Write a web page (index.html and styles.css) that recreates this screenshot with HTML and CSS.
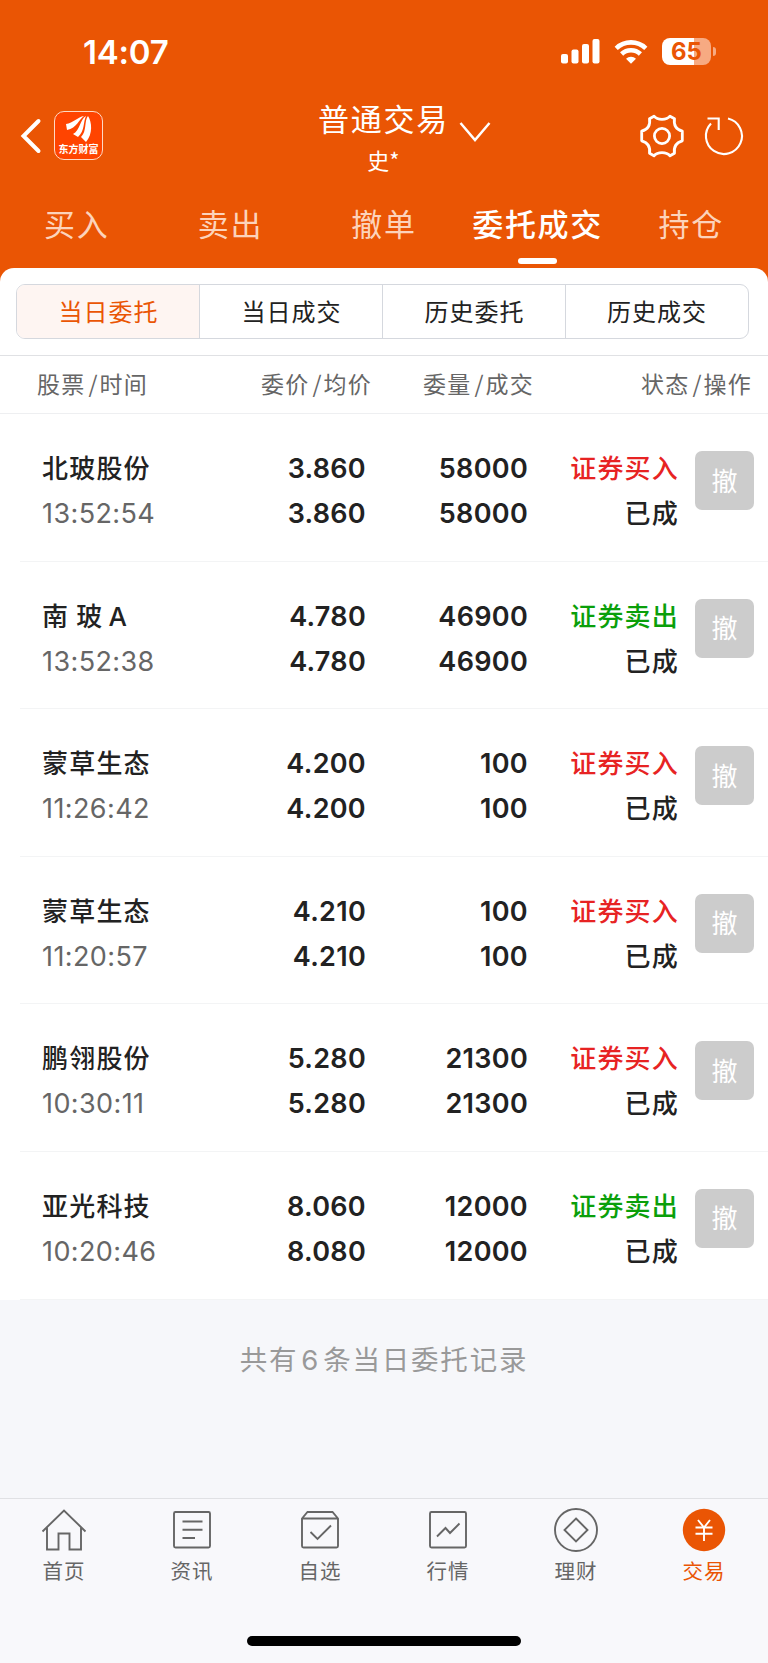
FILE: index.html
```html
<!DOCTYPE html>
<html lang="zh-CN">
<head>
<meta charset="UTF-8">
<meta name="viewport" content="width=device-width, initial-scale=1.0">
<title>普通交易</title>
<link rel="stylesheet" href="styles.css">
</head>
<body>
    <header>
        <div class="status-bar">
            <span class="clock">14:07</span>
            <div class="status-icons">
                <svg class="signal" width="39" height="25" viewBox="0 0 39 25" fill="#fff">
                    <rect x="0" y="15" width="7" height="9.5" rx="2"/>
                    <rect x="10.5" y="10.5" width="7" height="14" rx="2"/>
                    <rect x="21" y="5" width="7" height="19.5" rx="2"/>
                    <rect x="31.5" y="0" width="7" height="24.5" rx="2"/>
                </svg>
                <svg class="wifi" width="34" height="26" viewBox="0 0 34 26" fill="none" stroke="#fff" stroke-width="4.6">
                    <path d="M2.2 9.3a21.5 21.5 0 0 1 29.6 0"/>
                    <path d="M7.6 15a13.6 13.6 0 0 1 18.8 0"/>
                    <path d="M17 24.8l-5-5.1a7.2 7.2 0 0 1 10 0z" fill="#fff" stroke="none"/>
                </svg>
                <div class="battery"><span>65</span></div>
                <i class="battery-cap"></i>
            </div>
        </div>
        <div class="nav-bar">
            <div class="nav-left">
                <svg width="22" height="36" viewBox="0 0 22 36" fill="none" stroke="#fff" stroke-width="4" stroke-linecap="round" stroke-linejoin="miter">
                    <path d="M18.5 3L3.5 18 18.5 33"/>
                </svg>
                <div class="logo">
                    <svg width="28" height="28" viewBox="0 0 28 28" fill="#fff">
                        <path d="M1 9C8 8 13 2 19 1 14 4 12 13 2 15z"/>
                        <path d="M8 19C15 16 15 4 21 1 18 7 20 16 13 22z"/>
                        <path d="M16 22C22 16 19 6 23 1 27 7 28 19 21 27z"/>
                    </svg>
                    <span>东方财富</span>
                </div>
            </div>
            <div class="nav-title">
                <div class="title">普通交易</div>
                <div class="account">史*</div>
            </div>
            <svg class="arrow" width="32" height="22" viewBox="0 0 32 22" fill="none" stroke="#fff" stroke-width="2.5">
                <path d="M1.5 2L16 19 30.5 2"/>
            </svg>
            <div class="nav-right">
                <svg width="46" height="46" viewBox="-23 -23 46 46" fill="none" stroke="#fff" stroke-width="2.8" stroke-linejoin="round">
                    <circle r="7.6"/>
                    <path d="M-12.5 -17.3L-8 -19.8C-4.500 -15.600 4.500 -15.600 8 -19.800L12.500 -17.300C11.500 -11 14.500 -6.500 20.300 -4.800V4.800C14.500 6.500 11.500 11 12.500 17.300L8 19.800C4.500 15.600 -4.500 15.600 -8 19.800L-12.500 17.300C-11.500 11 -14.500 6.500 -20.300 4.800V-4.800C-14.500 -6.500 -11.500 -11 -12.500 -17.300z"/>
                </svg>
                <svg width="42" height="46" viewBox="-21 -23 42 46" fill="none" stroke="#fff" stroke-width="2.1">
                    <path d="M4 -17.5A18 18 0 1 1 -13 -12.500"/>
                    <path d="M-16.500 -17.500H-5.300V-6"/>
                </svg>
            </div>
        </div>
        <nav class="tabs">
            <a>买入</a>
            <a>卖出</a>
            <a>撤单</a>
            <a class="active">委托成交</a>
            <a>持仓</a>
        </nav>
    </header>

    <main>
        <div class="segment">
            <a class="active">当日委托</a>
            <a>当日成交</a>
            <a>历史委托</a>
            <a>历史成交</a>
        </div>
        <div class="list-head">
            <span>股票<i>/</i>时间</span>
            <span>委价<i>/</i>均价</span>
            <span>委量<i>/</i>成交</span>
            <span>状态<i>/</i>操作</span>
        </div>
        <div class="order">
            <div class="stock"><b>北玻股份</b><span>13:52:54</span></div>
            <div class="num"><span>3.860</span><span>3.860</span></div>
            <div class="num"><span>58000</span><span>58000</span></div>
            <div class="state"><span class="buy">证券买入</span><span>已成</span></div>
            <button>撤</button>
        </div>
        <div class="order">
            <div class="stock"><b>南 玻<em>A</em></b><span>13:52:38</span></div>
            <div class="num"><span>4.780</span><span>4.780</span></div>
            <div class="num"><span>46900</span><span>46900</span></div>
            <div class="state"><span class="sell">证券卖出</span><span>已成</span></div>
            <button>撤</button>
        </div>
        <div class="order">
            <div class="stock"><b>蒙草生态</b><span>11:26:42</span></div>
            <div class="num"><span>4.200</span><span>4.200</span></div>
            <div class="num"><span>100</span><span>100</span></div>
            <div class="state"><span class="buy">证券买入</span><span>已成</span></div>
            <button>撤</button>
        </div>
        <div class="order">
            <div class="stock"><b>蒙草生态</b><span>11:20:57</span></div>
            <div class="num"><span>4.210</span><span>4.210</span></div>
            <div class="num"><span>100</span><span>100</span></div>
            <div class="state"><span class="buy">证券买入</span><span>已成</span></div>
            <button>撤</button>
        </div>
        <div class="order">
            <div class="stock"><b>鹏翎股份</b><span>10:30:11</span></div>
            <div class="num"><span>5.280</span><span>5.280</span></div>
            <div class="num"><span>21300</span><span>21300</span></div>
            <div class="state"><span class="buy">证券买入</span><span>已成</span></div>
            <button>撤</button>
        </div>
        <div class="order">
            <div class="stock"><b>亚光科技</b><span>10:20:46</span></div>
            <div class="num"><span>8.060</span><span>8.080</span></div>
            <div class="num"><span>12000</span><span>12000</span></div>
            <div class="state"><span class="sell">证券卖出</span><span>已成</span></div>
            <button>撤</button>
        </div>
    </main>
    <p class="total">共有<i>6</i>条当日委托记录</p>

    <footer>
        <div class="menu">
            <a>
                <svg width="46" height="44" viewBox="0 0 46 44">
                    <path d="M1.5 23.5L23 2.5 44.5 23.5M6 19.5V41.5H17.5V25.5H28.5V41.5H40V19.5"/>
                </svg>
                首页
            </a>
            <a>
                <svg width="46" height="44" viewBox="0 0 46 44">
                    <rect x="5" y="4" width="36" height="35.5" rx="1.5"/>
                    <path d="M13.5 13.5H33.5M13.5 21.8H33.5M13.5 30H26"/>
                </svg>
                资讯
            </a>
            <a>
                <svg width="46" height="44" viewBox="0 0 46 44">
                    <path d="M5 10.5L10.5 4H35.5L41 10.5V38Q41 39.5 39.5 39.5H6.5Q5 39.5 5 38zM5 10.5H41M13.5 24L20.5 31 34 17.5"/>
                </svg>
                自选
            </a>
            <a>
                <svg width="46" height="44" viewBox="0 0 46 44">
                    <rect x="5" y="4" width="36" height="35.5" rx="1.5"/>
                    <path d="M12 28.5L20.5 20 25 25 34.5 15.5"/>
                </svg>
                行情
            </a>
            <a>
                <svg width="46" height="44" viewBox="0 0 46 44">
                    <circle cx="23" cy="22" r="21"/>
                    <path d="M23 10.5L34.5 22 23 33.5 11.5 22z"/>
                </svg>
                理财
            </a>
            <a class="active">
                <svg width="46" height="44" viewBox="0 0 46 44">
                    <circle class="fill" cx="23" cy="22" r="21.2"/>
                    <path class="yuan" d="M17 12L23 19.5 29 12M23 19.5V33M14.5 19.5H31.5M14.5 25.8H31.5"/>
                </svg>
                交易
            </a>
        </div>
        <div class="home-bar"></div>
    </footer>
</body>
</html>
```

FILE: styles.css
```css
* {
    box-sizing: border-box;
}
body {
    margin: 0;
    height: 1663px;
    display: flex;
    flex-direction: column;
    background-color: #f6f7fa;
    font-family: "Noto Sans CJK SC", sans-serif;
    color: #222;
    overflow: hidden;
}
header {
    background-color: #ea5504;
    color: #fff;
    height: 288px;
    flex: none;
}
i, em {
    font-style: normal;
}

/* status bar */
.status-bar {
    height: 103px;
    padding: 0 52px 0 83px;
    display: flex;
    align-items: center;
    justify-content: space-between;
}
.clock {
    font: 600 33px/40px Inter, sans-serif;
    letter-spacing: -0.2px;
}
.status-icons {
    display: flex;
    align-items: center;
}
.wifi {
    margin: 0 14px 0 14px;
}
.battery {
    width: 49px;
    height: 27px;
    border-radius: 8px;
    background: linear-gradient(90deg, #fff 32px, #f7aa82 32px);
    color: #ea5504;
    font: 700 24px/28px Inter, sans-serif;
    text-align: center;
}
.battery-cap {
    width: 3px;
    height: 9px;
    margin-left: 2px;
    border-radius: 0 4px 4px 0;
    background-color: #f7aa82;
}

/* title bar */
.nav-bar {
    height: 81px;
    display: grid;
    grid-template-columns: 318px 131px 1fr 129px;
    align-items: start;
}
.nav-left {
    display: flex;
    align-items: center;
    gap: 12px;
    padding: 8px 0 0 20px;
}
.logo {
    width: 49px;
    height: 49px;
    border: 1px solid #ffd9c4;
    border-radius: 10px;
    background-color: #ff4400;
    display: flex;
    flex-direction: column;
    align-items: center;
    padding-top: 3px;
}
.logo span {
    font: bold 10px/12px "Noto Sans CJK SC", sans-serif;
    white-space: nowrap;
}
.nav-title {
    text-align: center;
    margin-top: -2px;
}
.title {
    font-size: 31px;
    line-height: 34px;
    letter-spacing: 1.7px;
    white-space: nowrap;
}
.account {
    font-size: 22px;
    line-height: 30px;
    margin-top: 9px;
}
.arrow {
    margin: 18px 0 0 10px;
}
.nav-right {
    display: flex;
    gap: 18px;
    padding-top: 10px;
}

/* tabs */
.tabs {
    display: grid;
    grid-template-columns: repeat(5, 1fr);
    text-align: center;
    font-size: 31px;
    line-height: 78px;
    letter-spacing: 1.7px;
}
.tabs a {
    color: #fcd3bb;
}
.tabs .active {
    color: #fff;
    font-weight: 500;
}
.tabs .active::after {
    content: "";
    display: block;
    width: 39px;
    height: 6px;
    margin: -4px auto 0;
    border-radius: 3px;
    background-color: #fff;
}

/* order list */
main {
    background-color: #fff;
    border-radius: 14px 14px 0 0;
    margin-top: -20px;
    padding-top: 16px;
}
.segment {
    display: grid;
    grid-template-columns: 183px 183px 183px 1fr;
    width: 733px;
    height: 55px;
    margin: 0 0 16px 16px;
    border: 1px solid #d5d8de;
    border-radius: 9px;
    overflow: hidden;
    text-align: center;
    font-size: 24px;
    line-height: 52px;
    letter-spacing: 1px;
}
.segment a + a {
    border-left: 1px solid #d5d8de;
    margin-left: -1px;
}
.segment .active {
    color: #ea5504;
    background-color: #fef5f2;
}
.list-head {
    display: grid;
    grid-template-columns: 148px 224px 162px 218px;
    height: 59px;
    border-top: 1px solid #e0e1e4;
    border-bottom: 1px solid #eeeff1;
    color: #666;
    font-size: 23px;
    line-height: 55px;
    letter-spacing: 1.2px;
    text-align: right;
    white-space: nowrap;
}
.list-head i {
    margin: 0 1px 0 3px;
}
.order {
    display: grid;
    grid-template-columns: 159px 165px 162px 151px 76px;
    height: 147.6px;
    margin-left: 20px;
    padding: 32px 0 0 22px;
    border-bottom: 1px solid #f3f4f5;
    font-size: 26px;
    line-height: 45px;
}
.order div {
    display: flex;
    flex-direction: column;
}
.stock b, .state {
    font-weight: 500;
    letter-spacing: 1.2px;
    white-space: nowrap;
}
.stock b {
    height: 45px;
    line-height: 41px;
}
.stock em {
    margin-left: 5px;
    font: 500 26px/41px Inter, sans-serif;
}
.stock span {
    font: 400 27px/45px Inter, sans-serif;
    letter-spacing: 0.4px;
    color: #666;
}
.num {
    font: 600 27px/45px Inter, sans-serif;
    letter-spacing: 0.3px;
    text-align: right;
}
.state {
    text-align: right;
    margin-top: -2px;
}
.buy {
    color: #e72323;
}
.sell {
    color: #0a9f0a;
}
.order button {
    width: 59px;
    height: 59px;
    margin: 5px 0 0 16px;
    padding: 0 0 3px;
    border: none;
    border-radius: 7px;
    background-color: #ccc;
    color: #fff;
    font: 26px "Noto Sans CJK SC", sans-serif;
}
.total {
    margin: 37px 0 0;
    text-align: center;
    font-size: 27.5px;
    line-height: 42px;
    letter-spacing: 1.8px;
    color: #999;
}
.total i {
    margin: 0 3px;
    font-family: Inter, sans-serif;
}

/* bottom menu */
footer {
    margin-top: auto;
    height: 165px;
    border-top: 1px solid #e0e1e4;
    background-color: #f8f8fb;
}
.menu {
    display: grid;
    grid-template-columns: repeat(6, 1fr);
    height: 137px;
    padding-top: 9px;
}
.menu a {
    display: flex;
    flex-direction: column;
    align-items: center;
    color: #666;
    font-size: 20.5px;
    line-height: 37px;
    letter-spacing: 1px;
}
.menu svg {
    fill: none;
    stroke: #666;
    stroke-width: 1.9;
}
.menu .active {
    color: #ea5504;
}
.menu .fill {
    fill: #ea5504;
    stroke: none;
}
.menu .yuan {
    stroke: #fff;
}
.home-bar {
    width: 274px;
    height: 10px;
    margin: 0 auto;
    border-radius: 5px;
    background-color: #000;
}
```
